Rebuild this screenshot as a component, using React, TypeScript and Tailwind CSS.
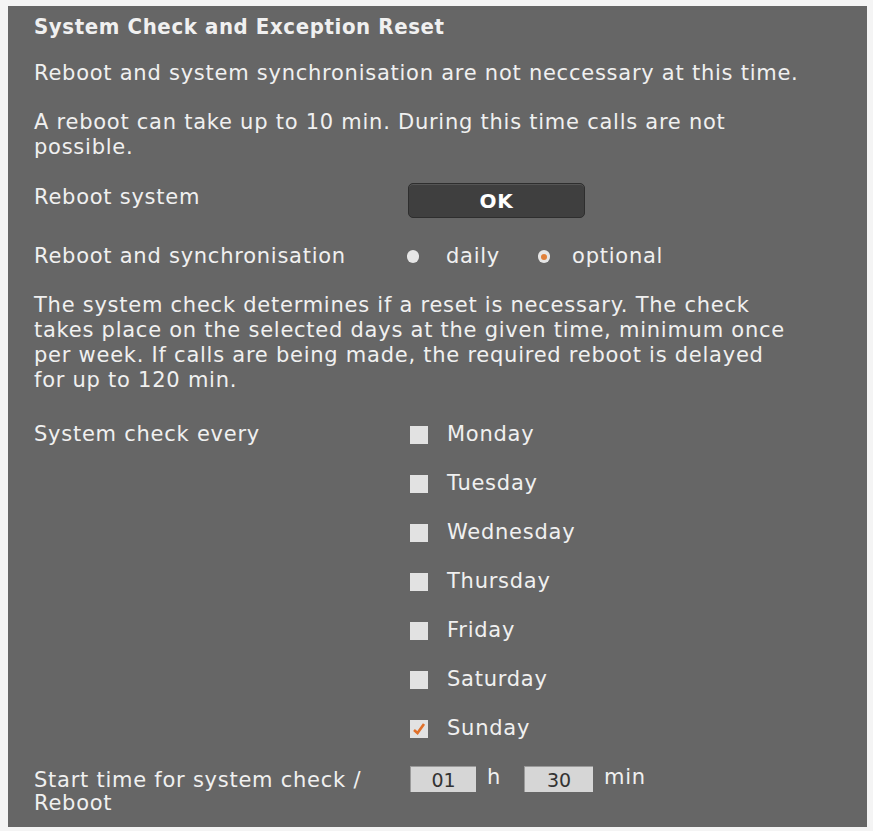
import { useState } from "react";

const days = ["Monday", "Tuesday", "Wednesday", "Thursday", "Friday", "Saturday", "Sunday"];

const Radio = ({ checked }: { checked: boolean }) => (
  <span className="w-[12px] h-[13px] rounded-full bg-[#e6e6e6] flex items-center justify-center">
    {checked && <span className="w-[6px] h-[6px] rounded-full bg-[#e0803a]" />}
  </span>
);

const Checkbox = ({ checked }: { checked: boolean }) => (
  <span className="w-[18px] h-[18px] bg-[#e2e2e2] flex items-center justify-center">
    {checked && (
      <svg width="14" height="14" viewBox="0 0 14 14">
        <path d="M2 8 L5.5 11 L12 2" fill="none" stroke="#e0702a" strokeWidth="2.6" />
      </svg>
    )}
  </span>
);

export default function App() {
  const [mode, setMode] = useState("optional");
  const [checked, setChecked] = useState<string[]>(["Sunday"]);

  return (
    <div className="bg-[#f4f4f4] w-[873px] h-[831px] pl-[8px] pr-[6px] pt-[6px] pb-[4px] font-['DejaVu_Sans',sans-serif] text-[#f0f0f0] text-[21px] tracking-[0.75px]">
      <div className="bg-[#666666] h-full pl-[26px] pt-[8px]">
        <div className="text-[22px] font-bold leading-[26px] tracking-[0.6px] font-['DejaVu_Sans_Condensed','DejaVu_Sans',sans-serif]">
          System Check and Exception Reset
        </div>

        <div className="leading-[25px] mt-[21px]">
          Reboot and system synchronisation are not neccessary at this time.
        </div>
        <div className="leading-[25px] mt-[24px] max-w-[720px]">
          A reboot can take up to 10 min. During this time calls are not possible.
        </div>

        <div className="flex mt-[25px] items-start">
          <div className="w-[374px] leading-[25px]">Reboot system</div>
          <button className="w-[177px] h-[35px] mt-[-2px] rounded-[5px] bg-[#3f3f3f] border border-[#2e2e2e] text-white font-bold text-[20px] shadow-[inset_0_1px_0_#555]">
            OK
          </button>
        </div>

        <div className="flex mt-[26px] items-center leading-[25px]">
          <div className="w-[373px]">Reboot and synchronisation</div>
          <label className="flex items-center gap-[27px] cursor-pointer" onClick={() => setMode("daily")}>
            <Radio checked={mode === "daily"} />
            <span>daily</span>
          </label>
          <label className="flex items-center gap-[22px] ml-[38px] cursor-pointer" onClick={() => setMode("optional")}>
            <Radio checked={mode === "optional"} />
            <span>optional</span>
          </label>
        </div>

        <div className="leading-[25px] mt-[24px] max-w-[762px]">
          The system check determines if a reset is necessary. The check takes place on the selected days at the given
          time, minimum once per week. If calls are being made, the required reboot is delayed for up to 120 min.
        </div>

        <div className="flex mt-[29px] leading-[25px]">
          <div className="w-[376px]">System check every</div>
          <div className="flex flex-col gap-[24px]">
            {days.map((d) => (
              <label
                key={d}
                className="flex items-center gap-[19px] cursor-pointer"
                onClick={() =>
                  setChecked((c) => (c.includes(d) ? c.filter((x) => x !== d) : [...c, d]))
                }
              >
                <Checkbox checked={checked.includes(d)} />
                <span>{d}</span>
              </label>
            ))}
          </div>
        </div>

        <div className="flex mt-[27px] leading-[23px]">
          <div className="w-[376px] pt-[1px]">
            Start time for system check /<br />
            Reboot
          </div>
          <div className="flex items-start gap-[11px] mt-[-2px]">
            <input
              defaultValue="01"
              className="w-[66px] h-[26px] bg-[#d6d6d6] text-[#333] text-[19px] tracking-normal text-center border-t border-l border-[#9a9a9a] outline-none"
            />
            <span>h</span>
            <input
              defaultValue="30"
              className="w-[69px] h-[26px] ml-[12px] bg-[#d6d6d6] text-[#333] text-[19px] tracking-normal text-center border-t border-l border-[#9a9a9a] outline-none"
            />
            <span>min</span>
          </div>
        </div>
      </div>
    </div>
  );
}
